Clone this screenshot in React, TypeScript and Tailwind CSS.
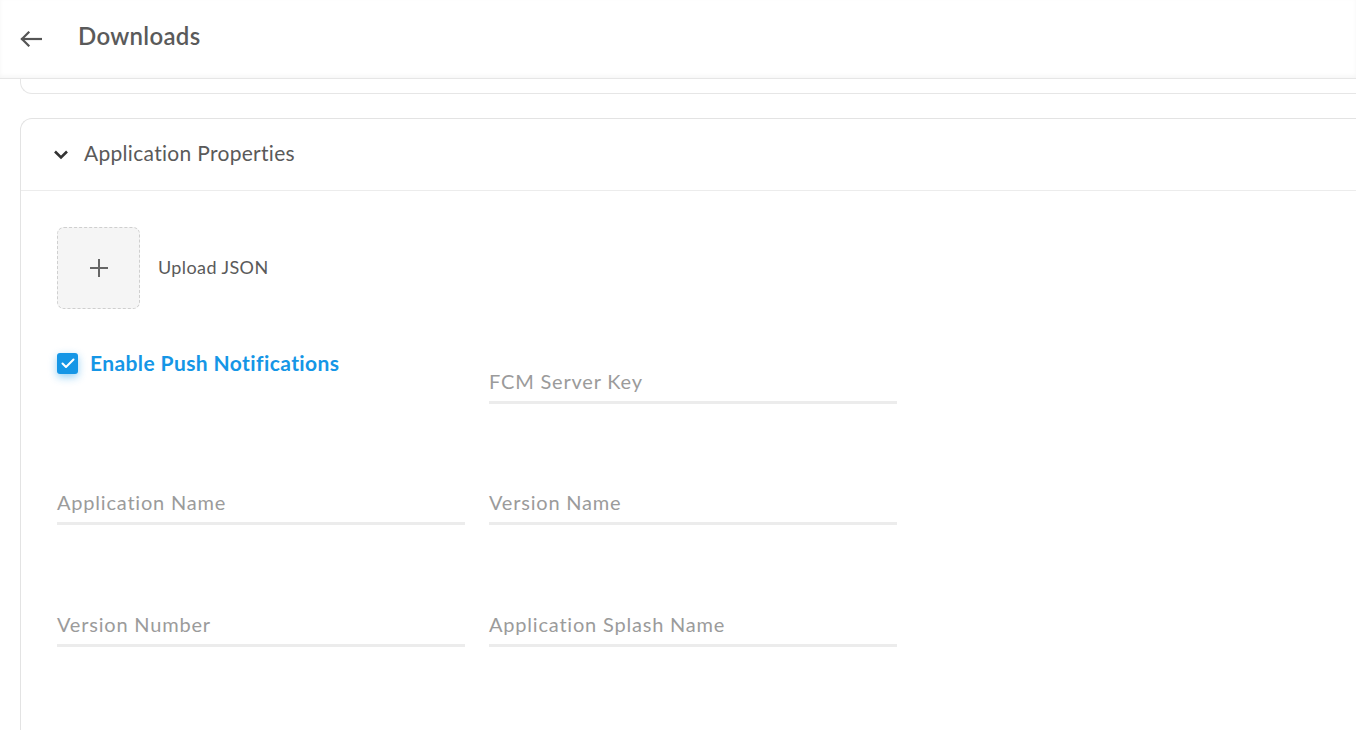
import React from 'react';

const font = { fontFamily: 'Lato, "Noto Sans", sans-serif' };

const Field = ({ label }: { label: string }) => (
  <div className="w-[408px]">
    <div className="h-[40px] flex items-end pb-[10px] text-[20px] tracking-[0.8px] text-[#9b9b9b] leading-none">{label}</div>
    <div className="h-[3px] bg-[#ececec]" />
  </div>
);

export default function App() {
  return (
    <div className="w-[1356px] h-[730px] overflow-hidden bg-white" style={font}>
      {/* Header */}
      <header className="h-[79px] flex items-center border-b border-[#e6e6e6] shadow-[0_-2px_4px_rgba(0,0,0,0.04)_inset]">
        <button className="ml-[19px] w-[24px] h-[24px] flex items-center justify-center text-[#555]">
          <svg width="22" height="16" viewBox="0 0 22 16" fill="none" stroke="currentColor" strokeWidth="2.2" strokeLinecap="square">
            <path d="M2 8h19" />
            <path d="M8.5 1.5L2 8l6.5 6.5" />
          </svg>
        </button>
        <h1 className="ml-[35px] text-[24px] font-semibold text-[#5a5a5a] tracking-[0.3px] pb-[6px]">Downloads</h1>
      </header>

      {/* Previous card tail */}
      <div className="ml-[20px] w-[1400px] h-[15px] border-l border-b border-[#e6e6e6] rounded-bl-[12px]" />

      {/* Application Properties card */}
      <section className="ml-[20px] mt-[24px] w-[1400px] border-l border-t border-[#e3e3e3] rounded-tl-[12px] h-[620px]">
        <div className="h-[72px] flex items-center border-b border-[#ececec]">
          <svg className="ml-[32px]" width="16" height="11" viewBox="0 0 16 11" fill="none" stroke="#333" strokeWidth="2.6">
            <path d="M2 2.5l6 6 6-6" />
          </svg>
          <span className="ml-[15px] text-[21px] tracking-[0.3px] text-[#5a5a5a] pb-[4px]">Application Properties</span>
        </div>

        <div className="pl-[36px] pt-[36px]">
          <div className="flex items-center">
            <div className="w-[83px] h-[82px] rounded-[7px] border border-dashed border-[#cfcfcf] bg-[#f5f5f5] flex items-center justify-center">
              <svg width="20" height="20" viewBox="0 0 20 20" stroke="#666" strokeWidth="2">
                <path d="M10 1v18M1 10h18" />
              </svg>
            </div>
            <span className="ml-[18px] text-[18px] tracking-[0.4px] text-[#5a5a5a] pb-[2px]">Upload JSON</span>
          </div>

          <div className="flex mt-[44px] gap-[24px]">
            <div className="w-[408px] flex items-start">
              <div className="w-[21px] h-[21px] rounded-[3px] bg-[#1596e6] flex items-center justify-center shadow-[0_3px_8px_rgba(21,150,230,0.45)]">
                <svg width="14" height="11" viewBox="0 0 14 11" fill="none" stroke="white" strokeWidth="2" strokeLinecap="round" strokeLinejoin="round">
                  <path d="M1.5 5.5l3.5 3.5 7.5-7.5" />
                </svg>
              </div>
              <span className="ml-[12px] -mt-[6px] text-[21px] tracking-[0.4px] font-bold text-[#1596e6]">Enable Push Notifications</span>
            </div>
            <div className="mt-[8px]">
              <Field label="FCM Server Key" />
            </div>
          </div>

          <div className="flex mt-[78px] gap-[24px]">
            <Field label="Application Name" />
            <Field label="Version Name" />
          </div>

          <div className="flex mt-[79px] gap-[24px]">
            <Field label="Version Number" />
            <Field label="Application Splash Name" />
          </div>
        </div>
      </section>
    </div>
  );
}
